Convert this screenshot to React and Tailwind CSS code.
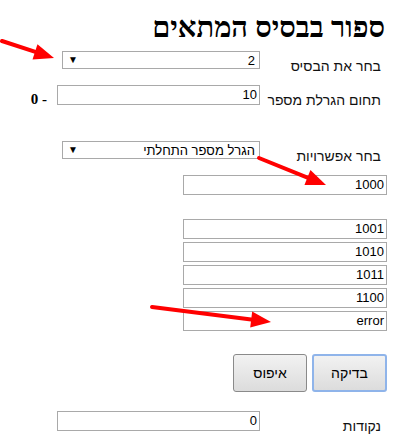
import React from "react";

const sans = { fontFamily: '"Liberation Sans", Arial, sans-serif' };

function arrowHead(x1, y1, x2, y2, len = 20, half = 8) {
  const dx = x2 - x1;
  const dy = y2 - y1;
  const d = Math.hypot(dx, dy);
  const ux = dx / d;
  const uy = dy / d;
  const bx = x2 - ux * len;
  const by = y2 - uy * len;
  return {
    line: { x1, y1, x2: bx + ux * 2, y2: by + uy * 2 },
    pts: `${x2},${y2} ${bx - uy * half},${by + ux * half} ${bx + uy * half},${by - ux * half}`,
  };
}

const arrows = [
  [2, 41, 54, 58],
  [259, 158, 326, 185],
  [152, 307, 271, 322],
];

function FakeSelect({ value, width }) {
  return (
    <div
      className={`h-[18px] ${width} border border-[#a9a9a9] bg-white flex items-center justify-between pr-[4px] pl-[5px] text-[13px] text-black`}
    >
      <span className="leading-none">{value}</span>
      <span className="text-[10px] leading-none">▼</span>
    </div>
  );
}

function Field({ value, width }) {
  return (
    <div
      className={`h-[20px] ${width} border border-[#a9a9a9] bg-white text-right pr-[2px] text-[13px] leading-[18px] text-black`}
    >
      {value}
    </div>
  );
}

function Label({ children }) {
  return (
    <div className="w-[121px] shrink-0 pt-[6px] text-[14px] leading-[18px] text-[#111] text-right whitespace-nowrap">
      {children}
    </div>
  );
}

export default function App() {
  return (
    <div dir="rtl" className="relative w-[412px] h-[445px] overflow-hidden bg-white" style={sans}>
      <div className="flex flex-col">
        <div className="h-[51px] pt-[11px] pr-[27px]">
          <h1
            className="text-[29px] leading-[32px] font-bold text-black"
            style={{ fontFamily: '"Liberation Serif", "Times New Roman", serif' }}
          >
            ספור בבסיס המתאים
          </h1>
        </div>

        <div className="h-[34px] flex items-start pr-[31px]">
          <Label>בחר את הבסיס</Label>
          <FakeSelect value="2" width="w-[198px]" />
        </div>

        <div className="h-[56px] flex items-start pr-[31px]">
          <Label>תחום הגרלת מספר</Label>
          <Field value="10" width="w-[203px]" />
          <span
            dir="ltr"
            className="mr-[10px] pt-[5px] text-[15px] leading-[18px] font-bold text-black"
            style={{ fontFamily: '"Liberation Serif", "Times New Roman", serif' }}
          >
            0 -
          </span>
        </div>

        <div className="h-[34px] flex items-start pr-[31px]">
          <Label>בחר אפשרויות</Label>
          <FakeSelect value="הגרל מספר התחלתי" width="w-[198px]" />
        </div>

        <div className="h-[44px] pr-[25px]">
          <Field value="1000" width="w-[204px]" />
        </div>

        <div className="flex flex-col gap-[3px] pr-[25px]">
          {["1001", "1010", "1011", "1100", "error"].map((v) => (
            <Field key={v} value={v} width="w-[204px]" />
          ))}
        </div>

        <div className="mt-[23px] h-[38px] flex gap-[5px] pr-[25px]">
          <button
            className="w-[75px] h-[38px] rounded-[3px] border-2 border-[#8fb4ea] bg-gradient-to-b from-[#f2f2f2] to-[#dcdcdc] text-[14px] text-black"
            style={sans}
          >
            בדיקה
          </button>
          <button
            className="w-[74px] h-[38px] rounded-[3px] border border-[#8a8a8a] bg-gradient-to-b from-[#f2f2f2] to-[#dcdcdc] text-[14px] text-black"
            style={sans}
          >
            איפוס
          </button>
        </div>

        <div className="mt-[19px] flex items-start pr-[31px]">
          <Label>נקודות</Label>
          <Field value="0" width="w-[203px]" />
        </div>
      </div>

      <svg className="absolute inset-0 pointer-events-none" width="412" height="445">
        {arrows.map(([a, b, c, d], i) => {
          const h = arrowHead(a, b, c, d);
          return (
            <g key={i}>
              <line {...h.line} stroke="#ff0000" strokeWidth="4" strokeLinecap="round" />
              <polygon points={h.pts} fill="#ff0000" />
            </g>
          );
        })}
      </svg>
    </div>
  );
}
